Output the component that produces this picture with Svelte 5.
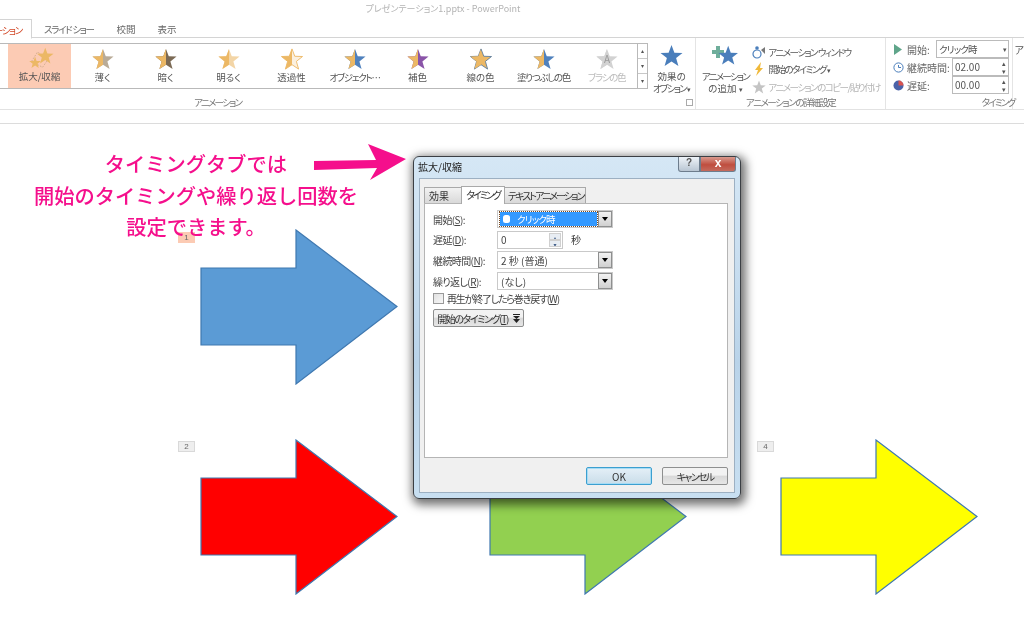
<script>
	const STAR = 'M12 1 L15 9 L23.5 9.3 L16.8 14.6 L19.2 23 L12 18.2 L4.8 23 L7.2 14.6 L.5 9.3 L9 9 Z';
	const gold = '#ecb865';

	// left and right half colours of each gallery star
	const effects = [
		{ label: '拡大/収縮', active: true },
		{ label: '薄く', left: gold, right: '#b9ab97' },
		{ label: '暗く', left: gold, right: '#7b6a55' },
		{ label: '明るく', left: gold, right: '#f3d5a6' },
		{ label: '透過性', left: gold, right: '#fbf0df', stroke: '#ecb865' },
		{ label: 'オブジェクト…', left: gold, right: '#4f81bd', tight: true },
		{ label: '補色', left: gold, right: '#8a54a8' },
		{ label: '線の色', left: gold, right: gold, stroke: '#5f7f9f' },
		{ label: '塗りつぶしの色', left: gold, right: '#4f81bd', tight: true },
		{ label: 'ブラシの色', left: '#d2d2d2', right: '#d2d2d2', disabled: true, tight: true }
	];

	const arrows = [
		{ x: 200, y: 105, fill: '#5b9bd5' },
		{ x: 200, y: 315, fill: '#ff0000' },
		{ x: 489, y: 315, fill: '#92d050' },
		{ x: 780, y: 315, fill: '#ffff00' }
	];

	const markers = [
		{ n: 1, x: 178, y: 108, on: true },
		{ n: 2, x: 178, y: 317 },
		{ n: 4, x: 757, y: 317 }
	];
</script>

{#snippet halfStar(fx, size = 24)}
	<svg width={size} height={size} viewBox="0 0 24 24">
		<path d={STAR} fill={fx.right} stroke={fx.stroke ?? 'none'} stroke-width="1" />
		<path d="M12 1 L12 18.2 L4.8 23 L7.2 14.6 L.5 9.3 L9 9 Z" fill={fx.left} />
		{#if fx.disabled}
			<text x="12" y="16" text-anchor="middle" font-size="11" fill="#999">A</text>
		{/if}
	</svg>
{/snippet}

{#snippet comboArrow()}
	<span class="combo-arrow"><i></i></span>
{/snippet}

<div class="screen">
	<header class="title">プレゼンテーション1.pptx - PowerPoint</header>

	<nav class="tabs">
		<span class="tab active">ーション</span>
		<span class="tab kana">スライド ショー</span>
		<span class="tab">校閲</span>
		<span class="tab">表示</span>
	</nav>

	<section class="ribbon">
		<div class="group anim">
			<div class="gallery-row">
				<div class="gallery">
					{#each effects as fx}
						<div class="effect" class:active={fx.active} class:disabled={fx.disabled}>
							{#if fx.active}
								<svg class="grow" width="30" height="26" viewBox="0 0 30 26">
									<path d="M5 17 L12 6 L25 14 L18 24 Z" fill="none" stroke="#b99a78" stroke-width=".7" stroke-dasharray="2 1.5" />
									<path transform="translate(11 0) scale(.85)" d={STAR} fill={gold} />
									<path transform="translate(2 11) scale(.6)" d={STAR} fill={gold} />
								</svg>
							{:else}
								{@render halfStar(fx)}
							{/if}
							<span class:kana={fx.tight}>{fx.label}</span>
						</div>
					{/each}
				</div>
				<div class="scroller">
					<span>▴</span><span>▾</span><span>▾</span>
				</div>
				<div class="options">
					<svg width="23" height="23" viewBox="0 0 24 24"><path d={STAR} fill="#4a7ebb" /></svg>
					<span>効果の</span>
					<span class="kana">オプション <small>▾</small></span>
				</div>
			</div>
			<div class="group-label first kana">アニメーション</div>
			<i class="launcher"></i>
		</div>

		<div class="group detail">
			<div class="detail-row">
				<div class="add">
					<svg width="28" height="24" viewBox="0 0 28 24">
						<path d="M4 3h4v4h4v4H8v4H4v-4H0V7h4z" fill="#6fae9b" />
						<path transform="translate(6 2) scale(.85)" d={STAR} fill="#4a7ebb" />
					</svg>
					<span class="kana">アニメーション</span>
					<span>の追加 <small>▾</small></span>
				</div>
				<ul class="cmds">
					<li>
						<svg width="14" height="14" viewBox="0 0 14 14">
							<circle cx="5" cy="9" r="4" fill="none" stroke="#4a7ebb" stroke-width="1.2" />
							<circle cx="5" cy="3" r="1.8" fill="#4a7ebb" />
							<path d="M9 5l4-3v7z" fill="#777" />
						</svg>
						<span>アニメーション ウィンドウ</span>
					</li>
					<li>
						<svg width="14" height="14" viewBox="0 0 14 14"><path d="M9 0L3 8h3l-2 6 7-8H8z" fill="#f0b93a" /></svg>
						<span>開始のタイミング <small>▾</small></span>
					</li>
					<li class="off">
						<svg width="14" height="14" viewBox="0 0 24 24"><path d={STAR} fill="#c4c4c4" /></svg>
						<span>アニメーションのコピー/貼り付け</span>
					</li>
				</ul>
			</div>
			<div class="group-label mid">アニメーションの詳細設定</div>
		</div>

		<div class="group timing">
			<div class="timing-grid">
				<svg width="10" height="11" viewBox="0 0 10 11"><path d="M1 0l8 5.5L1 11z" fill="#5fa58a" /></svg>
				<span>開始:</span>
				<div class="rb-field wide">クリック時<em>▾</em></div>

				<svg width="11" height="11" viewBox="0 0 11 11"><circle cx="5.5" cy="5.5" r="4.6" fill="#fff" stroke="#4a7ebb" /><path d="M5.5 3v2.5H8" fill="none" stroke="#4a7ebb" /></svg>
				<span>継続時間:</span>
				<div class="rb-field">02.00<em class="spin"><b>▴</b><b>▾</b></em></div>

				<svg width="11" height="11" viewBox="0 0 11 11"><circle cx="5.5" cy="5.5" r="5" fill="#4a62a8" /><path d="M5.5 5.5V.5A5 5 0 0 1 10.5 5.5z" fill="#d9534f" /></svg>
				<span>遅延:</span>
				<div class="rb-field">00.00<em class="spin"><b>▴</b><b>▾</b></em></div>
			</div>
			<div class="group-label right kana">タイミング</div>
		</div>

		<div class="group cut">ア</div>
	</section>

	<main class="slide">
		{#each arrows as a}
			<svg class="shape" style="left:{a.x}px;top:{a.y}px" width="198" height="156" viewBox="0 0 198 156">
				<path d="M1 39 H96 V1 L197 77.5 L96 155 V116 H1 Z" fill={a.fill} stroke="#3f78b0" stroke-width="1.2" />
			</svg>
		{/each}

		{#each markers as m}
			<span class="marker" class:on={m.on} style="left:{m.x}px;top:{m.y}px">{m.n}</span>
		{/each}

		<p class="callout">タイミングタブでは<br />開始のタイミングや繰り返し回数を<br />設定できます。</p>

		<svg class="pointer" width="100" height="44" viewBox="0 0 100 44">
			<path d="M1 18 L63 17 L55 1 L93 16 L57 37 L64 25 L1 27 Z" fill="#f50f8c" />
		</svg>

		<div class="dialog">
			<div class="dlg-title">
				<span>拡大/収縮</span>
				<div class="caption">
					<b class="help">?</b>
					<b class="close">x</b>
				</div>
			</div>
			<div class="dlg-body">
				<div class="dlg-tabs">
					<span>効果</span>
					<span class="current kana">タイミング</span>
					<span class="kana">テキスト アニメーション</span>
				</div>
				<div class="page">
					<div class="form">
						<label for="start">開始(<u>S</u>):</label>
						<div id="start" class="select focus">
							<span class="selected">
								<svg width="9" height="10" viewBox="0 0 9 10"><rect x="1" y="1" width="7" height="8" rx="2.5" fill="#fff" /></svg>
								<span>クリック時</span>
							</span>
							{@render comboArrow()}
						</div>

						<label for="delay">遅延(<u>D</u>):</label>
						<div class="delay-row">
							<div id="delay" class="select spinbox">
								<span>0</span>
								<span class="updown"><i>▴</i><i>▾</i></span>
							</div>
							<span class="unit">秒</span>
						</div>

						<label for="dur">継続時間(<u>N</u>):</label>
						<div id="dur" class="select"><span>2 秒 (普通)</span>{@render comboArrow()}</div>

						<label for="rep">繰り返し(<u>R</u>):</label>
						<div id="rep" class="select"><span>(なし)</span>{@render comboArrow()}</div>
					</div>
					<div class="check"><i></i><span>再生が終了したら巻き戻す(<u>W</u>)</span></div>
					<button class="btn trigger">
						<span>開始のタイミング(<u>T</u>)</span>
						<svg width="7" height="9" viewBox="0 0 7 9"><path d="M0 0h7v1H0zM0 2h7L3.5 5zM0 5h7L3.5 9z" fill="#222" /></svg>
					</button>
				</div>
				<div class="actions">
					<button class="btn ok">OK</button>
					<button class="btn"><span class="kana">キャンセル</span></button>
				</div>
			</div>
		</div>
	</main>
</div>

<style>
	:global(body) {
		margin: 0;
		background: #fff;
	}

	.screen {
		position: relative;
		width: 1024px;
		height: 644px;
		overflow: hidden;
		background: #fff;
		font-family: 'Noto Sans CJK JP', 'Noto Sans', sans-serif;
		font-feature-settings: 'palt';
		color: #555;
		font-size: 10px;
		filter: blur(0.3px);
	}

	/* the original UI font has narrow kana */
	.kana {
		letter-spacing: -1.7px;
	}

	small {
		font-size: 7px;
		letter-spacing: 0;
	}

	.title {
		height: 19px;
		line-height: 18px;
		text-align: center;
		color: #b4b4b4;
		font-size: 9px;
		padding-right: 138px;
	}

	.tabs {
		display: flex;
		height: 19px;
		border-bottom: 1px solid #d4d4d4;
		box-sizing: border-box;
		position: relative;
		z-index: 1;
	}

	.tab {
		padding: 0 11px;
		line-height: 20px;
		white-space: nowrap;
		color: #666;
		font-size: 9.5px;
	}

	.tab.kana {
		padding: 0 12px 0 12px;
		letter-spacing: -1.3px;
	}

	.tab.active {
		width: 32px;
		box-sizing: border-box;
		padding: 0 9px 0 0;
		color: #d24726;
		background: #fff;
		border: 1px solid #d4d4d4;
		border-left: 0;
		border-bottom-color: #fff;
		height: 20px;
		overflow: hidden;
		direction: rtl;
		letter-spacing: -1.3px;
	}

	.ribbon {
		display: flex;
		height: 72px;
		border-bottom: 1px solid #e2e2e2;
		box-sizing: border-box;
	}

	.group {
		position: relative;
		border-right: 1px solid #e4e4e4;
		box-sizing: border-box;
	}

	.group-label {
		position: absolute;
		left: 0;
		right: 0;
		bottom: 0;
		text-align: center;
		line-height: 14px;
		font-size: 9.5px;
		color: #777;
	}

	.group-label.first {
		padding-right: 260px;
	}

	.group-label.mid {
		letter-spacing: -1.4px;
	}

	.group-label.right {
		text-align: right;
		right: -3px;
	}

	.anim {
		width: 698px;
	}

	.gallery-row {
		display: flex;
		height: 46px;
		margin-top: 5px;
	}

	.gallery {
		display: flex;
		box-sizing: border-box;
		width: 637px;
		height: 46px;
		padding-left: 8px;
		border: 1px solid #b9b9b9;
		border-left: 0;
		border-right: 0;
		flex: none;
	}

	.effect {
		width: 63px;
		height: 44px;
		padding-top: 4px;
		box-sizing: border-box;
		display: flex;
		flex-direction: column;
		align-items: center;
		flex: none;
		white-space: nowrap;
		line-height: 14px;
		font-size: 9.5px;
	}

	.effect .kana {
		letter-spacing: -1.3px;
	}

	.effect svg {
		height: 22px;
		flex: none;
	}

	.effect.active {
		background: #fccbb4;
		padding-top: 3px;
	}

	.effect.disabled {
		color: #bbb;
	}

	.scroller {
		width: 11px;
		height: 46px;
		flex: none;
		box-sizing: border-box;
		border: 1px solid #b9b9b9;
		display: grid;
		grid-template-rows: repeat(3, 1fr);
		font-size: 6px;
		color: #555;
		text-align: center;
		line-height: 14px;
	}

	.scroller span + span {
		border-top: 1px solid #c8c8c8;
	}

	.options {
		flex: 1;
		display: flex;
		flex-direction: column;
		align-items: center;
		line-height: 12px;
		color: #555;
		font-size: 9.5px;
		white-space: nowrap;
		padding-top: 1px;
	}

	.options svg {
		flex: none;
		margin-bottom: 3px;
	}

	.launcher {
		position: absolute;
		right: 2px;
		bottom: 3px;
		width: 5px;
		height: 5px;
		border: 1px solid #aaa;
	}

	.detail {
		width: 190px;
	}

	.detail-row {
		display: flex;
		padding: 5px 0 0 4px;
	}

	.add {
		display: flex;
		flex-direction: column;
		align-items: center;
		flex: none;
		width: 50px;
		line-height: 12px;
		font-size: 9.5px;
		white-space: nowrap;
		margin-right: 2px;
	}

	.add svg {
		flex: none;
		margin-bottom: 3px;
		margin-left: 2px;
	}

	.cmds {
		list-style: none;
		margin: 0;
		padding: 0;
		color: #555;
		font-size: 9.5px;
		letter-spacing: -1.5px;
	}

	.cmds li {
		display: flex;
		align-items: center;
		gap: 2px;
		height: 17.5px;
		white-space: nowrap;
	}

	.cmds .off {
		color: #b5b5b5;
	}

	.timing {
		width: 127px;
	}

	.timing-grid {
		display: grid;
		grid-template-columns: 14px 45px 1fr;
		align-items: center;
		padding: 2px 0 0 7px;
		grid-auto-rows: 18px;
		font-size: 10px;
		color: #666;
		white-space: nowrap;
	}

	.rb-field {
		position: relative;
		height: 18px;
		box-sizing: border-box;
		border: 1px solid #bbb;
		line-height: 16px;
		padding-left: 2px;
		width: 57px;
		font-size: 10px;
		color: #555;
	}

	.rb-field.wide {
		margin-left: -16px;
		width: 73px;
		font-size: 9.5px;
		letter-spacing: -0.8px;
	}

	.rb-field em {
		position: absolute;
		right: 2px;
		top: 0;
		font-style: normal;
		font-size: 7px;
	}

	.rb-field .spin {
		display: flex;
		flex-direction: column;
		line-height: 8px;
	}

	.rb-field .spin b {
		font-weight: 400;
	}

	.cut {
		border: 0;
		padding: 4px 0 0 2px;
		font-size: 10px;
	}

	.slide {
		position: absolute;
		left: 0;
		right: 0;
		top: 123px;
		bottom: 0;
		border-top: 1px solid #dcdcdc;
	}

	.shape {
		position: absolute;
	}

	.marker {
		position: absolute;
		width: 17px;
		height: 11px;
		background: #eee;
		border: 1px solid #d9d9d9;
		box-sizing: border-box;
		font: 8px/10px 'Liberation Sans', sans-serif;
		text-align: center;
		color: #666;
	}

	.marker.on {
		background: #fccbb4;
		border-color: #fccbb4;
	}

	.callout {
		position: absolute;
		left: 0;
		top: 24px;
		width: 392px;
		margin: 0;
		text-align: center;
		font-size: 20.25px;
		line-height: 31.5px;
		font-weight: 500;
		font-feature-settings: normal;
		color: #f50f8c;
	}

	.pointer {
		position: absolute;
		left: 313px;
		top: 19px;
	}

	.dialog {
		position: absolute;
		left: 413px;
		top: 32px;
		width: 328px;
		height: 343px;
		box-sizing: border-box;
		padding: 0 5px 5px;
		border: 1px solid #3b3f44;
		border-radius: 6px;
		background: linear-gradient(#d5e7f5, #c9def0 30%, #b9d3e9 60%, #c8dff1);
		box-shadow: 2px 3px 10px 3px rgba(0, 0, 0, 0.55);
		display: flex;
		flex-direction: column;
		color: #333;
		font-size: 10px;
	}

	.dlg-title {
		height: 21px;
		flex: none;
		display: flex;
		justify-content: space-between;
		align-items: center;
		font-size: 10px;
		color: #222;
		line-height: 18px;
	}

	.dlg-title > span {
		margin: -2px 0 0 -1px;
	}

	.caption {
		display: flex;
		align-self: flex-start;
		margin-right: -1px;
	}

	.caption b {
		height: 15px;
		text-align: center;
		line-height: 12px;
		font-family: 'Liberation Sans', sans-serif;
		border: 1px solid #6d7d8d;
		border-top: 0;
		box-sizing: border-box;
	}

	.help {
		width: 22px;
		background: linear-gradient(#eef3f8, #b9c6d3);
		color: #555;
		border-radius: 0 0 0 3px;
	}

	.close {
		width: 36px;
		background: linear-gradient(#d99a8e, #bf4e3f 55%, #c46a5d);
		color: #fff;
		border-radius: 0 0 3px 0;
		font-size: 12px;
	}

	.dlg-body {
		flex: 1;
		background: #f0f0f0;
		border: 1px solid #9db0c2;
		display: flex;
		flex-direction: column;
		padding: 7px 6px 0 4px;
		min-height: 0;
	}

	.dlg-tabs {
		display: flex;
		height: 17px;
		flex: none;
		position: relative;
		z-index: 1;
		align-items: flex-end;
	}

	.dlg-tabs span {
		height: 16px;
		line-height: 15px;
		padding: 0 2px 0 3px;
		background: linear-gradient(#f2f2f2, #d9d9d9);
		border: 1px solid #a9a9a9;
		border-bottom: 0;
		margin-left: -1px;
		box-sizing: border-box;
		white-space: nowrap;
		font-size: 10px;
	}

	.dlg-tabs .kana {
		letter-spacing: -2px;
	}

	.dlg-tabs span:first-child {
		width: 38px;
		margin-left: 0;
		padding-left: 4px;
	}

	.dlg-tabs .current {
		height: 18px;
		width: 44px;
		padding: 0 0 3px;
		background: #fff;
		margin-bottom: -1px;
		text-align: center;
	}

	.page {
		flex: 1;
		background: #fff;
		border: 1px solid #b5b5b5;
		padding: 5px 8px;
		min-height: 0;
	}

	.form {
		display: grid;
		grid-template-columns: 64px 116px;
		grid-auto-rows: 20.6px;
		align-items: center;
		font-size: 10px;
	}

	.form label {
		white-space: nowrap;
		color: #444;
		letter-spacing: -0.6px;
	}

	.select {
		display: flex;
		justify-content: space-between;
		align-items: center;
		height: 18px;
		box-sizing: border-box;
		border: 1px solid #c9c9c9;
		padding-left: 3px;
		color: #444;
	}

	.select.focus {
		padding: 0 0 0 2px;
		background: #fff;
	}

	.selected {
		flex: 1;
		display: flex;
		align-items: center;
		gap: 6px;
		height: 14px;
		background: #3399ff;
		outline: 1px dotted #7a4a20;
		padding-left: 2px;
		color: #fff;
		font-size: 9.5px;
		letter-spacing: -0.8px;
		margin-right: 1px;
	}

	.combo-arrow {
		display: grid;
		place-items: center;
		width: 14px;
		height: 16px;
		box-sizing: border-box;
		border: 1px solid #8e8f8f;
		background: linear-gradient(#f2f2f2, #d0d0d0);
		flex: none;
	}

	.combo-arrow i {
		border: 3px solid transparent;
		border-top: 4px solid #000;
		border-bottom: 0;
	}

	.delay-row {
		display: flex;
		align-items: center;
	}

	.spinbox {
		width: 66px;
		flex: none;
	}

	.updown {
		display: flex;
		flex-direction: column;
		width: 12px;
		height: 14px;
		margin-right: 1px;
	}

	.updown i {
		flex: 1;
		font: normal 6px/7px 'DejaVu Sans', sans-serif;
		text-align: center;
		color: #44618c;
		background: #e8edf3;
		border: 1px solid #d0d0d0;
		overflow: hidden;
	}

	.unit {
		margin-left: 8px;
	}

	.check {
		display: flex;
		align-items: center;
		gap: 3px;
		height: 14px;
		white-space: nowrap;
		color: #444;
		letter-spacing: -1.2px;
	}

	.check i {
		width: 9px;
		height: 9px;
		border: 1px solid #999;
		background: linear-gradient(135deg, #e0e0e0, #f8f8f8);
	}

	.btn {
		font: inherit;
		font-feature-settings: inherit;
		color: #333;
		border: 1px solid #8e8f8f;
		border-radius: 2px;
		background: linear-gradient(#f2f2f2 45%, #d8d8d8 50%, #e6e6e6);
		padding: 0;
		height: 18px;
		line-height: 15px;
	}

	.trigger {
		display: flex;
		align-items: center;
		justify-content: center;
		gap: 5px;
		width: 91px;
		margin-top: 4px;
		white-space: nowrap;
		letter-spacing: -1.4px;
	}

	.actions {
		flex: none;
		height: 34px;
		display: flex;
		justify-content: flex-end;
		align-items: flex-start;
		gap: 10px;
		padding-top: 9px;
		box-sizing: border-box;
	}

	.actions .btn {
		width: 66px;
	}

	.actions .ok {
		border: 1px solid #3c9fd0;
		background: linear-gradient(#e4eff7, #c9dde9);
		box-shadow: inset 0 0 0 1px #a6dcf5;
	}
</style>
